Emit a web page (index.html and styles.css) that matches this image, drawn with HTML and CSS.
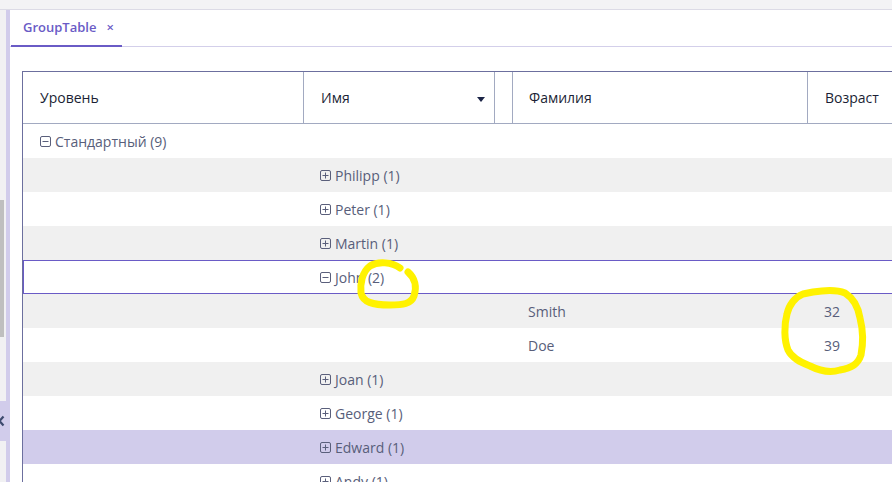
FILE: index.html
```html
<!DOCTYPE html>
<html lang="ru">
<head>
<meta charset="utf-8">
<title>GroupTable</title>
<link rel="stylesheet" href="styles.css">
</head>
<body>
<div class="topbar"></div>
<div class="main">
  <aside class="side">
    <div class="thumb"></div>
    <div class="collapse">
      <svg width="7" height="12" viewBox="0 0 7 12"><path d="M5.5 1.5 L1.5 6 L5.5 10.5" fill="none" stroke="#3d4a6e" stroke-width="2.2"/></svg>
    </div>
  </aside>
  <section class="content">
    <div class="tabbar">
      <div class="tab"><span class="tab-title">GroupTable</span><span class="tab-close">×</span></div>
    </div>
    <div class="table-wrap">
      <div class="table">
        <div class="row head">
          <div class="hcell">Уровень</div>
          <div class="hcell sort">Имя <svg width="8" height="5" viewBox="0 0 8 5"><path d="M0 0 H8 L4 5 Z" fill="#1b2446"/></svg></div>
          <div class="hcell"></div>
          <div class="hcell">Фамилия</div>
          <div class="hcell">Возраст</div>
        </div>
        <div class="row white">
          <div class="cell c-span"><svg class="box" viewBox="0 0 11 11"><rect x="0.5" y="0.5" width="10" height="10" rx="1.5"/><path d="M2.5 5.5 H8.5"/></svg>Стандартный (9)</div>
        </div>
        <div class="row grey"><div class="cell"></div><div class="cell c-span2"><svg class="box" viewBox="0 0 11 11"><rect x="0.5" y="0.5" width="10" height="10" rx="1.5"/><path d="M2.5 5.5 H8.5 M5.5 2.5 V8.5"/></svg>Philipp (1)</div></div>
        <div class="row white"><div class="cell"></div><div class="cell c-span2"><svg class="box" viewBox="0 0 11 11"><rect x="0.5" y="0.5" width="10" height="10" rx="1.5"/><path d="M2.5 5.5 H8.5 M5.5 2.5 V8.5"/></svg>Peter (1)</div></div>
        <div class="row grey"><div class="cell"></div><div class="cell c-span2"><svg class="box" viewBox="0 0 11 11"><rect x="0.5" y="0.5" width="10" height="10" rx="1.5"/><path d="M2.5 5.5 H8.5 M5.5 2.5 V8.5"/></svg>Martin (1)</div></div>
        <div class="row white selected"><div class="cell"></div><div class="cell c-span2"><svg class="box" viewBox="0 0 11 11"><rect x="0.5" y="0.5" width="10" height="10" rx="1.5"/><path d="M2.5 5.5 H8.5"/></svg>John (2)</div></div>
        <div class="row grey"><div class="cell"></div><div class="cell"></div><div class="cell"></div><div class="cell">Smith</div><div class="cell">32</div></div>
        <div class="row white"><div class="cell"></div><div class="cell"></div><div class="cell"></div><div class="cell">Doe</div><div class="cell">39</div></div>
        <div class="row grey"><div class="cell"></div><div class="cell c-span2"><svg class="box" viewBox="0 0 11 11"><rect x="0.5" y="0.5" width="10" height="10" rx="1.5"/><path d="M2.5 5.5 H8.5 M5.5 2.5 V8.5"/></svg>Joan (1)</div></div>
        <div class="row white"><div class="cell"></div><div class="cell c-span2"><svg class="box" viewBox="0 0 11 11"><rect x="0.5" y="0.5" width="10" height="10" rx="1.5"/><path d="M2.5 5.5 H8.5 M5.5 2.5 V8.5"/></svg>George (1)</div></div>
        <div class="row lav"><div class="cell"></div><div class="cell c-span2"><svg class="box" viewBox="0 0 11 11"><rect x="0.5" y="0.5" width="10" height="10" rx="1.5"/><path d="M2.5 5.5 H8.5 M5.5 2.5 V8.5"/></svg>Edward (1)</div></div>
        <div class="row white"><div class="cell"></div><div class="cell c-span2"><svg class="box" viewBox="0 0 11 11"><rect x="0.5" y="0.5" width="10" height="10" rx="1.5"/><path d="M2.5 5.5 H8.5 M5.5 2.5 V8.5"/></svg>Andy (1)</div></div>
      </div>
    </div>
  </section>
</div>
<svg class="marks" width="892" height="482" viewBox="0 0 892 482">
  <path d="M400 268 C392 262 378 261 370 266 C362 272 360 284 361 293 C363 302 372 305 390 305 C403 305 411 304 414 296 C417 287 415 278 408 272" />
  <path d="M813 292 C825 290 838 290 845 293 C853 298 858 306 860 318 C863 330 863 345 861 355 C858 364 852 368 840 370 C830 373 820 371 810 366 C800 362 792 358 788 350 C784 340 784 325 787 314 C789 305 795 297 803 294 Z" />
</svg>
</body>
</html>
```

FILE: styles.css
```css
* { box-sizing: border-box; }
html, body { margin: 0; padding: 0; }
body {
  width: 892px;
  height: 482px;
  overflow: hidden;
  background: #fff;
  font-family: "Open Sans", "Noto Sans", sans-serif;
  position: relative;
}
.topbar {
  height: 10px;
  background: #f3f3f5;
  border-bottom: 1px solid #dcdbe6;
}
.main {
  display: flex;
  height: 472px;
}
.side {
  width: 10px;
  flex: none;
  background: #f1f1f3;
  border-right: 4px solid #d1cceb;
  display: flex;
  flex-direction: column;
}
.thumb {
  margin-top: 190px;
  width: 4px;
  height: 137px;
  background: #bfbfbf;
}
.collapse {
  margin-top: 64px;
  width: 6px;
  height: 40px;
  background: #d1cceb;
  display: flex;
  align-items: center;
}
.collapse svg { display: block; margin-left: -2px; }
.content {
  flex: 1;
  min-width: 0;
  overflow: hidden;
}
.tabbar {
  height: 37px;
  border-bottom: 1px solid #d3cfea;
  display: flex;
  padding-left: 1px;
}
.tab {
  width: 111px;
  height: 37px;
  border-bottom: 2px solid #6a5bc6;
  margin-bottom: -1px;
  display: flex;
  align-items: center;
  padding-left: 12px;
  padding-bottom: 1px;
  color: #6a5bc6;
}
.tab-title {
  font-size: 13px;
  font-weight: 600;
}
.tab-close {
  margin-left: 10px;
  font-size: 13px;
  font-weight: 600;
}
.table-wrap {
  padding: 24px 0 0 12px;
}
.table {
  width: 980px;
  border-left: 1px solid #6c6f9e;
  border-top: 1px solid #6c6f9e;
}
.row {
  display: grid;
  grid-template-columns: 281px 191px 17px 296px 1fr;
  height: 34px;
  font-size: 14px;
  color: #585e7a;
}
.row.head {
  height: 52px;
  border-bottom: 1px solid #a2aac1;
  font-size: 14px;
  color: #1b1f35;
}
.hcell {
  border-right: 1px solid #a2aac1;
  display: flex;
  align-items: center;
  padding-left: 17px;
}
.hcell.sort {
  justify-content: space-between;
  padding-right: 9px;
}
.hcell.sort svg { margin-top: 4px; }
.cell {
  display: flex;
  align-items: center;
  padding-left: 16px;
  white-space: nowrap;
}
.c-span { grid-column: 1 / -1; padding-left: 17px; }
.c-span2 { grid-column: 2 / -1; padding-left: 16px; }
.grey { background: #f0f0f0; }
.white { background: #fff; }
.lav { background: #d1cceb; }
.selected {
  border-top: 1px solid #6a5bc6;
  border-bottom: 1px solid #6a5bc6;
  box-shadow: inset 1px 0 0 #6a5bc6;
}
.box {
  width: 11px;
  height: 11px;
  margin-right: 4px;
  fill: none;
  stroke: #5a5f7b;
  stroke-width: 1;
  flex: none;
}
.marks {
  position: absolute;
  left: 0;
  top: 0;
  pointer-events: none;
  fill: none;
  stroke: #fff200;
  stroke-width: 7;
  stroke-linecap: round;
  stroke-linejoin: round;
}
```
